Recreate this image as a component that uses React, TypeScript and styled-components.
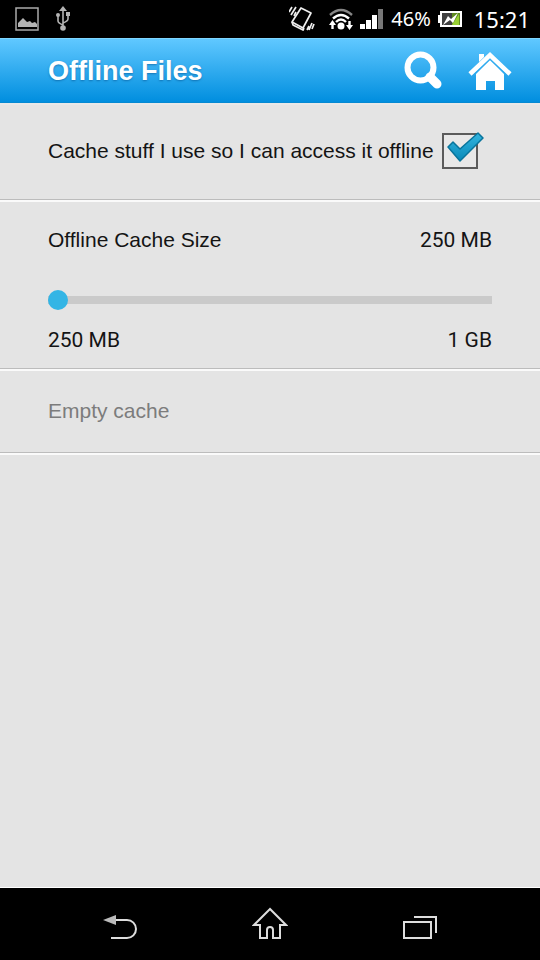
import React, { useState } from "react";
import styled, { createGlobalStyle } from "styled-components";

const GlobalStyle = createGlobalStyle`
  * { box-sizing: border-box; }
  body {
    margin: 0;
    background: #e4e4e4;
    color: #141414;
    font-family: "Liberation Sans", Arial, sans-serif;
  }
  button, input { margin: 0; font: inherit; }
`;

const Screen = styled.div`
  display: flex;
  flex-direction: column;
  min-height: 100vh;
`;

const StatusBar = styled.div`
  display: flex;
  justify-content: space-between;
  align-items: center;
  height: 38px;
  padding: 0 10px 0 15px;
  background: #000;
  color: #fff;
  font-family: "Noto Sans", sans-serif;
`;

const StatusGroup = styled.div<{ $gap: number }>`
  display: flex;
  align-items: center;
  gap: ${(p) => p.$gap}px;
  svg { display: block; flex: none; }
`;

const BatteryLevel = styled.span`
  font-size: 20px;
  line-height: 28px;
`;

const Clock = styled.span`
  padding-left: 5px;
  font-size: 22px;
  line-height: 32px;
`;

const Header = styled.header`
  display: flex;
  align-items: center;
  height: 65px;
  padding: 0 28px 0 48px;
  background: linear-gradient(#60c8ff, #008edf);
  border-top: 1px solid #7fd6ff;
  border-bottom: 1px solid #0589d2;
`;

const Title = styled.h1`
  flex: 1;
  margin: 0;
  color: #fff;
  font-size: 27px;
  line-height: 32px;
  text-shadow: 0 1px 2px rgba(0, 70, 130, 0.5);
`;

const HeaderActions = styled.div`
  display: flex;
  gap: 24px;
`;

const IconButton = styled.button`
  display: flex;
  padding: 0;
  border: 0;
  background: none;
  cursor: pointer;
`;

const Settings = styled.main`
  flex: 1;
  border-bottom: 1px solid #fff;
`;

const Section = styled.section<{ $pad: string }>`
  padding: ${(p) => p.$pad};
  border-top: 2px solid #fafafa;
  border-bottom: 1px solid #bcbcbc;
  &:first-child { border-top-color: #e8e8e8; }
`;

const SectionEnd = styled.div`
  height: 2px;
  background: #fafafa;
`;

const CheckRow = styled.label`
  display: flex;
  align-items: center;
  gap: 8px;
  font-size: 21px;
  line-height: 36px;
  cursor: pointer;
`;

const CheckHolder = styled.span`
  position: relative;
  display: flex;
  flex: none;
`;

const CheckBox = styled.input`
  appearance: none;
  width: 36px;
  height: 36px;
  border: 2px solid #5b5b5b;
  background: #e8e8e8;
`;

const CheckMark = styled.svg`
  position: absolute;
  left: 4px;
  top: -1px;
  pointer-events: none;
`;

const Line = styled.div`
  display: flex;
  justify-content: space-between;
  font-size: 21px;
  line-height: 28px;
`;

const Value = styled.output`
  font-family: Roboto, sans-serif;
`;

const Slider = styled.input`
  display: block;
  appearance: none;
  width: 100%;
  height: 20px;
  margin: 36px 0 16px;
  background: linear-gradient(#cacaca, #cacaca) center / 100% 8px no-repeat;
  cursor: pointer;
  &::-webkit-slider-thumb {
    appearance: none;
    width: 20px;
    height: 20px;
    border-radius: 50%;
    background: #33b5e5;
  }
`;

const EmptyButton = styled.button`
  display: block;
  width: 100%;
  padding: 0;
  border: 0;
  background: none;
  color: #7c7c7c;
  font-size: 21px;
  line-height: 28px;
  text-align: left;
`;

const NavBar = styled.nav`
  display: flex;
  justify-content: center;
  gap: 110px;
  height: 72px;
  background: #000;
`;

const NavButton = styled(IconButton)`
  align-items: center;
  justify-content: center;
  width: 40px;
`;

const PictureIcon = () => (
  <svg width="24" height="24" viewBox="0 0 24 24">
    <rect x="1" y="1" width="22" height="22" fill="none" stroke="#aaa" strokeWidth="1.5" />
    <path d="M3 20v-4l5-5 4 4 3-1 2 2 3-1 2 2v3z" fill="#b4b4b4" />
  </svg>
);

const UsbIcon = () => (
  <svg width="14" height="26" viewBox="0 0 14 26" fill="none" stroke="#b4b4b4" strokeWidth="1.6">
    <path d="M7 4v18M2 10v5q0 2 5 4M12 9v4q0 2-5 4" />
    <path d="M7 0l4 5H3z" fill="#b4b4b4" stroke="none" />
    <circle cx="7" cy="22" r="2.8" fill="#b4b4b4" stroke="none" />
    <circle cx="2" cy="9" r="2" fill="#b4b4b4" stroke="none" />
    <path d="M10 6h4v4h-4z" fill="#b4b4b4" stroke="none" />
  </svg>
);

const VibrateIcon = () => (
  <svg width="26" height="26" viewBox="0 0 26 26" fill="none" stroke="#eee" strokeWidth="1.7">
    <path d="M12 2l10 5-8 15-11-6z" strokeLinejoin="round" />
    <path d="M3 16l1 3 10 5 1-2" strokeLinejoin="round" />
    <path d="M0 6l3-5M2 9l5-8M5 10l2-4M18 24l2-4M20 24l3-7M23 23l2-5" />
  </svg>
);

const WifiIcon = () => (
  <svg width="24" height="24" viewBox="0 0 24 24" fill="none" stroke="#fff" strokeWidth="2.4">
    <path d="M1 8q11-10 22 0" stroke="#858585" />
    <path d="M4 11.500q8-7 16 0M7 15q5-5 10 0" />
    <circle cx="12" cy="19" r="3.500" fill="#fff" stroke="none" />
    <path d="M3.500 22v-5M20.500 14v5" />
    <path d="M0 18l3.500-5 3.500 5zM17 18h7l-3.500 5z" fill="#fff" stroke="none" />
  </svg>
);

const SignalIcon = () => (
  <svg width="24" height="20" viewBox="0 0 24 20">
    <path d="M0 15h5v5H0zM6 11h5v9H6zM12 6h5v14h-5z" fill="#fff" />
    <path d="M18 0h5v20h-5z" fill="#777" />
  </svg>
);

const BatteryIcon = () => (
  <svg width="24" height="16" viewBox="0 0 24 16">
    <path d="M2 0h22v16H2v-4H0V4h2z" fill="#fff" />
    <path d="M4 2h18v12H4z" fill="#404040" />
    <path d="M14 2h8v12h-8z" fill="#5e8a20" />
    <path d="M21 3v11h-7z" fill="#99d033" />
    <path d="M5 14l5-9 3 3 7-6-5 10-3-3z" fill="#fff" />
  </svg>
);

const SearchIcon = () => (
  <svg width="40" height="40" viewBox="0 0 40 40" fill="none" stroke="#fff">
    <circle cx="16.500" cy="16.500" r="13" strokeWidth="6" />
    <path d="M26 26l7 7" strokeWidth="9" strokeLinecap="round" />
  </svg>
);

const HomeIcon = () => (
  <svg width="44" height="40" viewBox="0 0 44 40">
    <path d="M11 10V3h5v3l-5 5z" fill="#fff" />
    <path d="M2 23L22 4l20 19" fill="none" stroke="#fff" strokeWidth="4.500" />
    <path d="M22 9l14 14v16h-9v-9h-9v9H8V23z" fill="#fff" />
    <path d="M6 23.500L22 8.500l16 15" fill="none" stroke="#2ea9ee" strokeWidth="1" />
  </svg>
);

const App = () => {
  const [checked, setChecked] = useState(true);
  const [size, setSize] = useState(250);
  return (
    <>
      <GlobalStyle />
      <Screen>
        <StatusBar>
          <StatusGroup $gap={17}>
            <PictureIcon />
            <UsbIcon />
          </StatusGroup>
          <StatusGroup $gap={7}>
            <StatusGroup $gap={14}>
              <VibrateIcon />
              <WifiIcon />
            </StatusGroup>
            <SignalIcon />
            <BatteryLevel>46%</BatteryLevel>
            <BatteryIcon />
            <Clock>15:21</Clock>
          </StatusGroup>
        </StatusBar>
        <Header>
          <Title>Offline Files</Title>
          <HeaderActions>
            <IconButton aria-label="Search"><SearchIcon /></IconButton>
            <IconButton aria-label="Home"><HomeIcon /></IconButton>
          </HeaderActions>
        </Header>
        <Settings>
          <Section $pad="28px 48px 30px">
            <CheckRow>
              <span>Cache stuff I use so I can access it offline</span>
              <CheckHolder>
                <CheckBox
                  type="checkbox"
                  checked={checked}
                  onChange={(e) => setChecked(e.target.checked)}
                />
                {checked && (
                  <CheckMark width="40" height="32" viewBox="0 0 40 32">
                    <defs>
                      <linearGradient id="tick" x2="0" y2="1">
                        <stop stopColor="#35b5df" />
                        <stop offset="1" stopColor="#0789b8" />
                      </linearGradient>
                    </defs>
                    <path
                      d="M2 15l5-5 7 7L32 1l5 5-23 23z"
                      fill="url(#tick)"
                      stroke="#08749c"
                      strokeWidth="1.500"
                      strokeLinejoin="round"
                    />
                  </CheckMark>
                )}
              </CheckHolder>
            </CheckRow>
          </Section>
          <Section $pad="24px 48px 14px">
            <Line>
              <label htmlFor="cache-size">Offline Cache Size</label>
              <Value htmlFor="cache-size">{size === 1000 ? "1 GB" : `${size} MB`}</Value>
            </Line>
            <Slider
              id="cache-size"
              type="range"
              min={250}
              max={1000}
              step={250}
              value={size}
              onChange={(e) => setSize(Number(e.target.value))}
            />
            <Line>
              <Value as="span">250 MB</Value>
              <Value as="span">1 GB</Value>
            </Line>
          </Section>
          <Section $pad="26px 48px 27px">
            <EmptyButton disabled>Empty cache</EmptyButton>
          </Section>
          <SectionEnd />
        </Settings>
        <NavBar>
          <NavButton aria-label="Back">
            <svg width="36" height="34" viewBox="0 0 36 34" fill="none" stroke="#ddd" strokeWidth="2">
              <path d="M14 13h11a9 9 0 0 1 0 18H9" />
              <path d="M1 13l13-5v10z" fill="#bbb" stroke="none" />
            </svg>
          </NavButton>
          <NavButton aria-label="Home screen">
            <svg width="36" height="34" viewBox="0 0 36 34" fill="none" stroke="#ddd" strokeWidth="2">
              <path d="M18 2L2 18h6v13h7v-8a3 3 0 0 1 6 0v8h7V18h6z" />
            </svg>
          </NavButton>
          <NavButton aria-label="Recent apps">
            <svg width="36" height="34" viewBox="0 0 36 34" fill="none" stroke="#ddd" strokeWidth="2">
              <path d="M2 15h27v16H2zM12 10h22v16" />
            </svg>
          </NavButton>
        </NavBar>
      </Screen>
    </>
  );
};

export default App;
